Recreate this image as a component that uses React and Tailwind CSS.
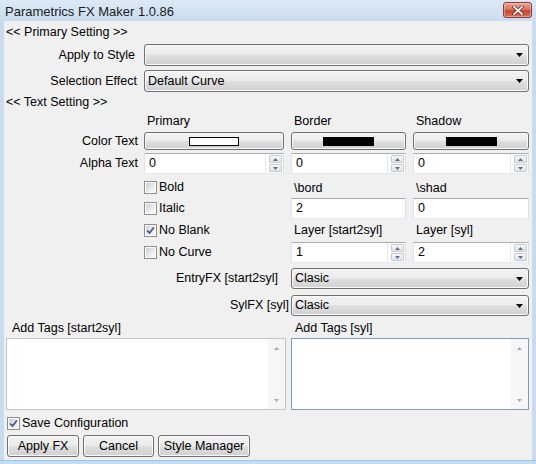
import React from "react";

const GRAD =
  "bg-[linear-gradient(#f3f3f3_0%,#ececec_45%,#dedede_55%,#d0d0d0_100%)]";

function Arrow() {
  return (
    <svg width="7" height="4" viewBox="0 0 7 4" className="ml-auto mr-[5px] shrink-0">
      <path d="M0 0H7L3.5 4Z" fill="#000" />
    </svg>
  );
}

function Combo({ text, className }) {
  return (
    <div
      className={`flex items-center rounded-[3px] border border-[#707070] pl-[3px] shadow-[inset_0_0_0_1px_#fafafa] ${GRAD} ${className}`}
    >
      <span className="whitespace-nowrap">{text}</span>
      <Arrow />
    </div>
  );
}

function ColorBtn({ className, swatch }) {
  return (
    <div
      className={`flex h-[18px] items-center justify-center rounded-[3px] border border-[#707070] shadow-[inset_0_0_0_1px_#fafafa] ${GRAD} ${className}`}
    >
      <div className={swatch} />
    </div>
  );
}

function SpinArrows() {
  return (
    <div className="my-[1px] mr-[1px] flex w-[13px] flex-col gap-[1px]">
      <div className="flex flex-1 items-center justify-center rounded-[1px] border border-[#c5cbd4] bg-[linear-gradient(#f7f7f7,#e2e2e2)]">
        <svg width="5" height="3" viewBox="0 0 5 3">
          <path d="M0 3H5L2.5 0Z" fill="#5d6f8c" />
        </svg>
      </div>
      <div className="flex flex-1 items-center justify-center rounded-[1px] border border-[#c5cbd4] bg-[linear-gradient(#f7f7f7,#e2e2e2)]">
        <svg width="5" height="3" viewBox="0 0 5 3">
          <path d="M0 0H5L2.5 3Z" fill="#5d6f8c" />
        </svg>
      </div>
    </div>
  );
}

function Spin({ value, className }) {
  return (
    <div
      className={`flex h-[21px] border border-[#abadb3] border-b-[#e3e9ef] border-l-[#e2e3ea] border-r-[#dbdfe6] bg-white ${className}`}
    >
      <div className="mr-[3px] flex flex-1 items-center border-r border-[#e3e9ef] pl-[4px]">
        {value}
      </div>
      <SpinArrows />
    </div>
  );
}

function TextBox({ value, className }) {
  return (
    <div
      className={`flex h-[21px] items-center border border-[#abadb3] border-b-[#e3e9ef] border-l-[#e2e3ea] border-r-[#dbdfe6] bg-white pl-[4px] ${className}`}
    >
      {value}
    </div>
  );
}

function Check({ checked }) {
  return (
    <div className="flex h-[13px] w-[13px] shrink-0 items-center justify-center border border-[#8e8f8f] bg-white p-[1px]">
      <div className="flex h-full w-full items-center justify-center bg-[linear-gradient(135deg,#cfd1d4,#f4f4f4_80%)]">
        {checked && (
          <svg width="9" height="9" viewBox="0 0 9 9">
            <path d="M1.2 4.6 L3.6 7 L7.8 1.4" stroke="#3f5490" strokeWidth="1.7" fill="none" />
          </svg>
        )}
      </div>
    </div>
  );
}

function CheckRow({ checked, label }) {
  return (
    <div className="flex items-center gap-[2px] whitespace-nowrap">
      <Check checked={checked} />
      <span>{label}</span>
    </div>
  );
}

function TextArea({ className }) {
  return (
    <div className={`flex h-[72px] border bg-white ${className}`}>
      <div className="flex-1" />
      <div className="flex w-[17px] flex-col items-center justify-between bg-[#f6f6f6] pb-[7px] pt-[8px]">
        <svg width="5" height="3" viewBox="0 0 5 3">
          <path d="M0 3H5L2.5 0Z" fill="#a9a9a9" />
        </svg>
        <svg width="5" height="3" viewBox="0 0 5 3">
          <path d="M0 0H5L2.5 3Z" fill="#a9a9a9" />
        </svg>
      </div>
    </div>
  );
}

function Btn({ children, className }) {
  return (
    <div
      className={`flex h-[22px] items-center justify-center whitespace-nowrap rounded-[3px] border border-[#707070] shadow-[inset_0_0_0_1px_#fafafa] ${GRAD} ${className}`}
    >
      {children}
    </div>
  );
}

export default function App() {
  return (
    <div className="flex h-[464px] w-[536px] flex-col whitespace-nowrap bg-[#c8dcf1] font-['Liberation_Sans',Arial,sans-serif] text-[12.5px] leading-none text-black">
      {/* Title bar */}
      <div className="flex h-[21px] shrink-0 bg-[linear-gradient(#dde9f6,#c9dcf0)]">
        <div className="flex items-center pl-[5px] pt-[1px] text-[13px] text-[#1a1a1a]">
          Parametrics FX Maker 1.0.86
        </div>
        <div className="ml-auto mr-[4px] mt-[2px] flex h-[16px] w-[29px] items-center justify-center rounded-[3px] border border-[#8b3b2f] bg-[linear-gradient(#e9a595_0%,#d87662_45%,#c5452f_55%,#d4735c_100%)] shadow-[inset_0_0_0_1px_rgba(255,255,255,0.35)]">
          <svg width="12" height="9" viewBox="0 0 12 9">
            <path d="M2 1 L10 8 M10 1 L2 8" stroke="#6b2a20" strokeWidth="3.2" strokeLinecap="square" />
            <path d="M2 1 L10 8 M10 1 L2 8" stroke="#ffffff" strokeWidth="1.7" strokeLinecap="square" />
          </svg>
        </div>
      </div>

      {/* Body */}
      <div className="flex flex-1">
        <div className="w-[4px] shrink-0" />
        <div className="flex w-[528px] flex-col bg-[#f0f0f0] pr-[3px]">
          {/* Primary Setting */}
          <div className="flex h-[22px] items-center pl-[2px]">&lt;&lt; Primary Setting &gt;&gt;</div>

          <div className="mt-[1px] flex h-[22px]">
            <div className="flex w-[140px] items-center justify-end pr-[9px]">Apply to Style</div>
            <Combo text="" className="w-[385px]" />
          </div>
          <div className="mt-[4px] flex h-[22px]">
            <div className="flex w-[140px] items-center justify-end pr-[7px]">Selection Effect</div>
            <Combo text="Default Curve" className="w-[385px]" />
          </div>

          {/* Text Setting */}
          <div className="flex h-[21px] items-center pl-[2px]">&lt;&lt; Text Setting &gt;&gt;</div>

          <div className="flex h-[16px] items-center">
            <div className="w-[140px]" />
            <div className="w-[140px] pl-[3px]">Primary</div>
            <div className="ml-[7px] w-[115px] pl-[3px]">Border</div>
            <div className="ml-[7px] w-[116px] pl-[3px]">Shadow</div>
          </div>

          <div className="mt-[3px] flex h-[18px]">
            <div className="flex w-[140px] items-center justify-end pr-[6px]">Color Text</div>
            <ColorBtn className="w-[140px]" swatch="h-[9px] w-[50px] border border-black bg-white" />
            <ColorBtn className="ml-[7px] w-[115px]" swatch="h-[9px] w-[51px] bg-black" />
            <ColorBtn className="ml-[7px] w-[116px]" swatch="h-[9px] w-[51px] bg-black" />
          </div>

          <div className="mt-[3px] flex h-[21px]">
            <div className="flex w-[140px] items-center justify-end pr-[6px]">Alpha Text</div>
            <Spin value="0" className="w-[140px]" />
            <Spin value="0" className="ml-[7px] w-[115px]" />
            <Spin value="0" className="ml-[7px] w-[116px]" />
          </div>

          <div className="mt-[3px] flex h-[21px] items-center">
            <div className="w-[140px]" />
            <div className="w-[140px]">
              <CheckRow label="Bold" />
            </div>
            <div className="ml-[7px] w-[115px] pl-[3px] pt-[2px]">\bord</div>
            <div className="ml-[7px] w-[116px] pl-[3px] pt-[2px]">\shad</div>
          </div>

          <div className="flex h-[21px] items-center">
            <div className="w-[140px]" />
            <div className="w-[140px]">
              <CheckRow label="Italic" />
            </div>
            <TextBox value="2" className="ml-[7px] w-[115px]" />
            <TextBox value="0" className="ml-[7px] w-[116px]" />
          </div>

          <div className="mt-[1px] flex h-[21px] items-center">
            <div className="w-[140px]" />
            <div className="w-[140px]">
              <CheckRow checked label="No Blank" />
            </div>
            <div className="ml-[7px] w-[115px] pl-[3px]">Layer [start2syl]</div>
            <div className="ml-[7px] w-[116px] pl-[3px]">Layer [syl]</div>
          </div>

          <div className="mt-[1px] flex h-[21px] items-center">
            <div className="w-[140px]" />
            <div className="w-[140px]">
              <CheckRow label="No Curve" />
            </div>
            <Spin value="1" className="ml-[7px] w-[115px]" />
            <Spin value="2" className="ml-[7px] w-[116px]" />
          </div>

          <div className="mt-[5px] flex h-[21px]">
            <div className="flex w-[287px] items-center justify-end pr-[13px]">EntryFX [start2syl]</div>
            <Combo text="Clasic" className="w-[238px]" />
          </div>
          <div className="mt-[6px] flex h-[21px]">
            <div className="flex w-[287px] items-center justify-end pr-[2px]">SylFX [syl]</div>
            <Combo text="Clasic" className="w-[238px]" />
          </div>

          <div className="mt-[3px] flex h-[19px] items-center">
            <div className="w-[287px] pl-[8px]">Add Tags [start2syl]</div>
            <div className="pl-[4px]">Add Tags [syl]</div>
          </div>

          <div className="flex">
            <TextArea className="ml-[2px] w-[280px] border-[#c4c4c4]" />
            <TextArea className="ml-[5px] w-[238px] border-[#7f9db9]" />
          </div>

          <div className="mt-[3px] flex h-[20px] items-center pl-[3px]">
            <CheckRow checked label="Save Configuration" />
          </div>

          <div className="mt-[2px] flex gap-[4px] pl-[3px]">
            <Btn className="w-[72px]">Apply FX</Btn>
            <Btn className="w-[71px]">Cancel</Btn>
            <Btn className="w-[92px]">Style Manager</Btn>
          </div>
        </div>
        <div className="w-[4px] shrink-0" />
      </div>
      <div className="h-[4px] shrink-0 border-t border-[#86cfee] bg-[#c8dcf1]" />
    </div>
  );
}
